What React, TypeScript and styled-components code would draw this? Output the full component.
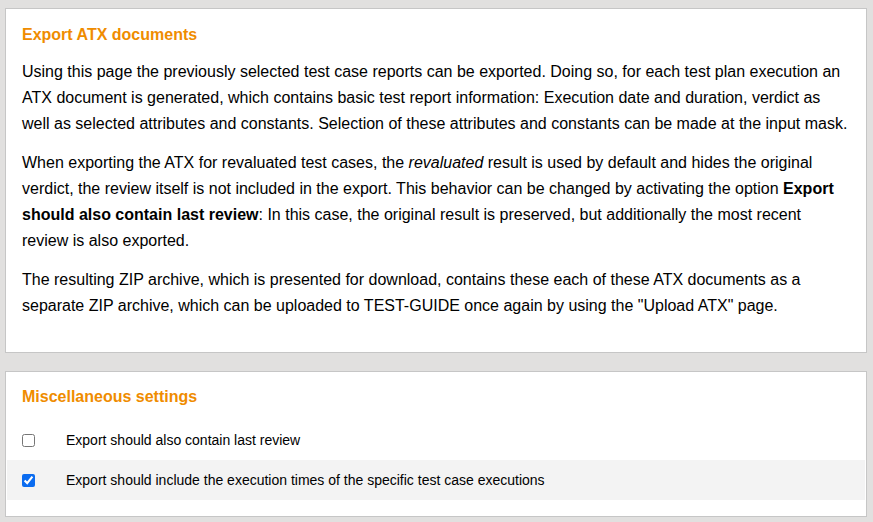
import React from "react";
import styled, { createGlobalStyle } from "styled-components";

const Global = createGlobalStyle`
  html, body { margin: 0; padding: 0; background: #e1e0df; }
  body { font-family: "Liberation Sans", Arial, sans-serif; color: #000; }
`;

const Page = styled.div`
  display: flex;
  flex-direction: column;
  gap: 18px;
  padding: 8px 6px 5px 5px;
`;

const Panel = styled.section<{ $pb: number; $pt: number }>`
  background: #fff;
  border: 1px solid #c6c6c6;
  padding: ${(p) => p.$pt}px 0 ${(p) => p.$pb}px;
`;

const Title = styled.h2<{ $mb: number }>`
  margin: 0 16px ${(p) => p.$mb}px;
  font-size: 16px;
  line-height: 20px;
  font-weight: bold;
  color: #ef8c00;
`;

const Para = styled.p`
  margin: 0 16px 13px;
  font-size: 16px;
  line-height: 26px;
  &:last-child { margin-bottom: 0; }
`;

const Row = styled.label<{ $alt?: boolean }>`
  display: flex;
  align-items: center;
  height: 40px;
  margin: 0 1px;
  padding-left: 15px;
  background: ${(p) => (p.$alt ? "#f3f3f3" : "transparent")};
  font-size: 14px;
`;

const Check = styled.input`
  width: 13px;
  height: 13px;
  margin: 0 31px 0 0;
  accent-color: #0b6cf0;
`;

export default function App() {
  return (
    <>
      <Global />
      <Page>
        <Panel $pt={16} $pb={33}>
          <Title $mb={14}>Export ATX documents</Title>
          <Para>
            Using this page the previously selected test case reports can be exported. Doing so, for each test plan
            execution an ATX document is generated, which contains basic test report information: Execution date and
            duration, verdict as well as selected attributes and constants. Selection of these attributes and constants
            can be made at the input mask.
          </Para>
          <Para>
            When exporting the ATX for revaluated test cases, the <i>revaluated</i> result is used by default and hides
            the original verdict, the review itself is not included in the export. This behavior can be changed by
            activating the option <b>Export should also contain last review</b>: In this case, the original result is
            preserved, but additionally the most recent review is also exported.
          </Para>
          <Para>
            The resulting ZIP archive, which is presented for download, contains these each of these ATX documents as a
            separate ZIP archive, which can be uploaded to TEST-GUIDE once again by using the "Upload ATX" page.
          </Para>
        </Panel>
        <Panel $pt={15} $pb={16}>
          <Title $mb={13}>Miscellaneous settings</Title>
          <Row>
            <Check type="checkbox" />
            Export should also contain last review
          </Row>
          <Row $alt>
            <Check type="checkbox" defaultChecked />
            Export should include the execution times of the specific test case executions
          </Row>
        </Panel>
      </Page>
    </>
  );
}
